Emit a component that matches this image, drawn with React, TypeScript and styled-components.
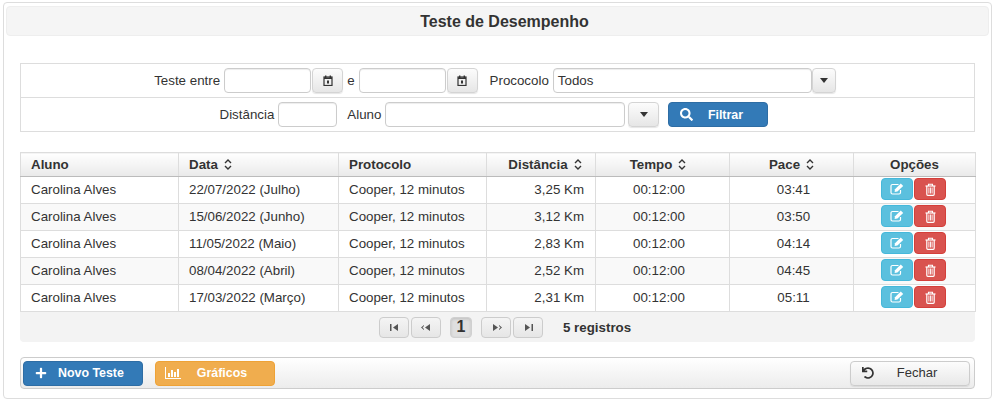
import React from "react";
import styled, { createGlobalStyle, css } from "styled-components";
import { FaPlus, FaSearch, FaUndo } from "react-icons/fa";

const Global = createGlobalStyle`
  html, body { margin: 0; padding: 0; background: #fff; }
  body { font-family: "Liberation Sans", Arial, sans-serif; font-size: 13.33px; color: #333; }
  * { box-sizing: border-box; }
`;

const Page = styled.div`
  width: 996px;
  height: 402px;
  padding: 2px 4px 3px 3px;
`;
const Panel = styled.div`
  height: 397px;
  border: 1px solid #ddd;
  border-radius: 4px;
  padding: 3px 2px 0 2px;
`;
const Title = styled.h1`
  margin: 0;
  height: 30px;
  padding-left: 14px;
  background: #f5f5f5;
  border: 1px solid #eee;
  border-radius: 4px;
  font-size: 16px;
  line-height: 29px;
  font-weight: 700;
  text-align: center;
  color: #333;
`;
const Body = styled.div`
  padding: 27px 14px 0 14px;
`;
const Filters = styled.div`
  border: 1px solid #ddd;
  height: 69px;
  display: flex;
  flex-direction: column;
`;
const FilterRow = styled.div<{ $last?: boolean }>`
  flex: 1;
  display: flex;
  align-items: center;
  justify-content: center;
  padding-right: ${(p) => (p.$last ? 7 : 5)}px;
  ${(p) => !p.$last && css`border-bottom: 1px solid #ddd;`}
`;
const Label = styled.label<{ $gap?: number }>`
  margin-left: ${(p) => p.$gap ?? 0}px;
  margin-right: 4px;
  line-height: 25px;
`;
const Field = styled.div<{ $w: number }>`
  width: ${(p) => p.$w}px;
  height: 25px;
  border: 1px solid #ccc;
  border-radius: 4px;
  background: #fff;
  box-shadow: inset 0 1px 1px rgba(0, 0, 0, 0.075);
  padding-left: 4px;
  line-height: 23px;
  color: #333;
`;
const AddOn = styled.button<{ $w: number; $gap?: number }>`
  width: ${(p) => p.$w}px;
  height: 25px;
  margin-left: ${(p) => p.$gap ?? 1}px;
  padding: 0;
  border: 1px solid #d4d4d4;
  border-radius: 4px;
  background: linear-gradient(#fcfcfc, #e6e6e6);
  box-shadow: 0 1px 1px rgba(0, 0, 0, 0.1);
  display: flex;
  align-items: center;
  justify-content: center;
  color: #333;
`;
const Action = styled.button<{ $tone: "blue" | "orange" | "plain"; $left?: number; $auto?: boolean; $w?: number }>`
  height: 25px;
  padding: 0;
  border-radius: 4px;
  font-family: inherit;
  font-size: 12.4px;
  font-weight: 700;
  display: grid;
  align-items: center;
  width: ${(p) => p.$w ?? 120}px;
  margin-left: ${(p) => p.$left ?? 0}px;
  ${(p) => p.$auto && css`margin-left: auto;`}
  grid-template-columns: 34px 1fr 20px;
  ${(p) =>
    p.$tone === "blue" &&
    css`background: #337ab7; border: 1px solid #2e6da4; color: #fff;`}
  ${(p) =>
    p.$tone === "orange" &&
    css`background: #f0ad4e; border: 1px solid #eea236; color: #fff;`}
  ${(p) =>
    p.$tone === "plain" &&
    css`background: linear-gradient(#fcfcfc, #e8e8e8); border: 1px solid #ccc; color: #333; font-weight: 400; font-size: 13px; padding-bottom: 1px; box-shadow: 0 1px 1px rgba(0,0,0,.08);`}
  & > svg { justify-self: center; }
`;
const ActionText = styled.span`
  text-align: center;
  white-space: nowrap;
`;
const TableWrap = styled.div`
  margin-top: 20px;
  border-radius: 0 0 4px 4px;
  background: #f3f3f3;
  height: 190px;
`;
const Grid = styled.table`
  width: 955px;
  table-layout: fixed;
  border-collapse: collapse;
  background: #fff;
`;
const Head = styled.th<{ $align?: string; $left?: number; $right?: number }>`
  height: 24px;
  padding: 0 ${(p) => p.$right ?? 10}px 0 ${(p) => p.$left ?? 10}px;
  border: 1px solid #ddd;
  border-bottom: 1px solid #bbb;
  background: linear-gradient(#fff, #e9e9e9);
  font-size: 13.33px;
  font-weight: 700;
  color: #333;
  text-align: ${(p) => p.$align ?? "left"};
  white-space: nowrap;
`;
const Row = styled.tr<{ $odd?: boolean }>`
  background: ${(p) => (p.$odd ? "#f9f9f9" : "#fff")};
`;
const Cell = styled.td<{ $align?: string; $left?: number; $right?: number }>`
  height: 27px;
  padding: 0 ${(p) => p.$right ?? 10}px 2px ${(p) => p.$left ?? 10}px;
  border: 1px solid #ddd;
  font-size: 13.33px;
  color: #333;
  text-align: ${(p) => p.$align ?? "left"};
  white-space: nowrap;
`;
const OptionCell = styled.div`
  display: flex;
  justify-content: center;
  gap: 1px;
`;
const IconBtn = styled.button<{ $tone: "info" | "danger" }>`
  width: 32px;
  height: 22px;
  padding: 0;
  border-radius: 4px;
  color: #fff;
  display: flex;
  align-items: center;
  justify-content: center;
  ${(p) =>
    p.$tone === "info"
      ? css`background: #5bc0de; border: 1px solid #46b8da;`
      : css`background: #d9534f; border: 1px solid #d43f3a;`}
`;
const SortMark = styled.svg`
  margin-left: 6px;
  vertical-align: -1px;
`;
const Pager = styled.div`
  height: 30px;
  display: flex;
  align-items: center;
  padding-left: 359px;
`;
const PageBtn = styled.button<{ $gap?: number }>`
  width: 30px;
  height: 21px;
  padding: 0;
  margin-left: ${(p) => p.$gap ?? 2}px;
  border: 1px solid #ccc;
  border-radius: 4px;
  background: linear-gradient(#f4f4f4, #e6e6e6);
  display: flex;
  align-items: center;
  justify-content: center;
`;
const PageNow = styled.button`
  width: 22px;
  height: 21px;
  margin: 0 9px;
  padding: 0;
  border: 1px solid #d0d0d0;
  border-radius: 4px;
  background: #dfdfdf;
  box-shadow: inset 0 1px 3px rgba(0, 0, 0, 0.15);
  font-family: inherit;
  font-size: 16px;
  font-weight: 700;
  color: #333;
`;
const Count = styled.span`
  margin-left: 20px;
  font-weight: 700;
  font-size: 13.33px;
`;
const Toolbar = styled.div`
  margin-top: 15px;
  height: 32px;
  border: 1px solid #ccc;
  border-radius: 4px;
  background: linear-gradient(#fff, #ececec);
  display: flex;
  align-items: center;
  padding: 0 4px 0 2px;
`;

const Calendar = () => (
  <svg width="10" height="11" viewBox="0 0 10 11" fill="none" stroke="#333">
    <rect x="1" y="2" width="8" height="8.5" strokeWidth="1.2" />
    <path d="M1 3.2h8M2.7 0.5v2.2M7.3 0.5v2.2" strokeWidth="1.4" />
    <rect x="4" y="5.5" width="2" height="3" fill="#333" stroke="none" />
  </svg>
);
const Caret = () => (
  <svg width="8" height="5" viewBox="0 0 8 5"><path d="M0 0h8L4 5z" fill="#333" /></svg>
);
const Sort = () => (
  <SortMark width="8" height="11" viewBox="0 0 8 11" fill="none" stroke="#333" strokeWidth="1.4">
    <path d="M1 4l3-3 3 3M1 7l3 3 3-3" />
  </SortMark>
);
const Bars = () => (
  <svg width="16" height="12" viewBox="0 0 16 12" fill="#fff">
    <path d="M0 0h1v11h15v1H0z" />
    <path d="M3 6h2v4H3zM6 3h2v7H6zM9 5h2v5H9zM12 2h2v8h-2z" />
  </svg>
);
const EditIcon = () => (
  <svg width="14" height="12" viewBox="0 0 14 12" fill="none">
    <path d="M8.5 1.5H2.5a1.5 1.5 0 0 0-1.5 1.5v6.5A1.5 1.5 0 0 0 2.5 11h6.5a1.5 1.5 0 0 0 1.5-1.5V7" stroke="#fff" strokeWidth="1.2" />
    <path d="M5 6.2L10.8 0.5l2.4 2.4L7.4 8.6 4.6 9z" fill="#fff" />
  </svg>
);
const TrashIcon = () => (
  <svg width="11" height="13" viewBox="0 0 11 13" fill="none" stroke="#fff">
    <path d="M0.5 3h10" strokeWidth="1.2" />
    <path d="M3.5 3V1.2h4V3" strokeWidth="1.1" />
    <path d="M1.8 3v8.3a1 1 0 0 0 1 1h5.4a1 1 0 0 0 1-1V3" strokeWidth="1.2" />
    <path d="M3.9 4.5v6M5.5 4.5v6M7.1 4.5v6" strokeWidth="0.9" />
  </svg>
);
const PagerIcon = ({ d }: { d: string }) => (
  <svg width="11" height="7" viewBox="0 0 11 7"><path d={d} fill="#555" /></svg>
);
const icons = {
  first: "M1 0h1.5v7H1zM4 3.5L9 0v7z",
  prev: "M0 3.5L3 1v1L1.5 3.5 3 5v1zM4 3.5L9 0v7z",
  next: "M2 0l5 3.5L2 7zM8 1l3 2.5L8 6V5l1.5-1.5L8 2z",
  last: "M2 0l5 3.5L2 7zM8.5 0H10v7H8.5z",
};

const rows = [
  ["22/07/2022 (Julho)", "3,25 Km", "03:41"],
  ["15/06/2022 (Junho)", "3,12 Km", "03:50"],
  ["11/05/2022 (Maio)", "2,83 Km", "04:14"],
  ["08/04/2022 (Abril)", "2,52 Km", "04:45"],
  ["17/03/2022 (Março)", "2,31 Km", "05:11"],
];
const widths = [158, 160, 148, 109, 134, 124, 122];

export default function App() {
  return (
    <Page>
      <Global />
      <Panel>
        <Title>Teste de Desempenho</Title>
        <Body>
          <Filters>
            <FilterRow>
              <Label>Teste entre</Label>
              <Field $w={87} />
              <AddOn $w={31}><Calendar /></AddOn>
              <Label $gap={4}>e</Label>
              <Field $w={87} />
              <AddOn $w={31}><Calendar /></AddOn>
              <Label $gap={12}>Prococolo</Label>
              <Field $w={259}>Todos</Field>
              <AddOn $w={24} $gap={0}><Caret /></AddOn>
            </FilterRow>
            <FilterRow $last>
              <Label>Distância</Label>
              <Field $w={59} />
              <Label $gap={10}>Aluno</Label>
              <Field $w={240} />
              <AddOn $w={31} $gap={3}><Caret /></AddOn>
              <Action $tone="blue" $left={9} $w={100}>
                <FaSearch size={13} />
                <ActionText>Filtrar</ActionText>
              </Action>
            </FilterRow>
          </Filters>
          <TableWrap>
            <Grid>
              <colgroup>
                {widths.map((w, i) => <col key={i} style={{ width: w }} />)}
              </colgroup>
              <thead>
                <tr>
                  <Head>Aluno</Head>
                  <Head>Data<Sort /></Head>
                  <Head>Protocolo</Head>
                  <Head $align="center" $left={18}>Distância<Sort /></Head>
                  <Head $align="center" $right={19}>Tempo<Sort /></Head>
                  <Head $align="center">Pace<Sort /></Head>
                  <Head $align="center">Opções</Head>
                </tr>
              </thead>
              <tbody>
                {rows.map(([date, dist, pace], i) => (
                  <Row key={date} $odd={i % 2 === 1}>
                    <Cell>Carolina Alves</Cell>
                    <Cell>{date}</Cell>
                    <Cell>Cooper, 12 minutos</Cell>
                    <Cell $align="right" $right={11}>{dist}</Cell>
                    <Cell $align="center" $right={17}>00:12:00</Cell>
                    <Cell $align="center" $left={14}>{pace}</Cell>
                    <Cell $align="center" $right={12}>
                      <OptionCell>
                        <IconBtn $tone="info"><EditIcon /></IconBtn>
                        <IconBtn $tone="danger"><TrashIcon /></IconBtn>
                      </OptionCell>
                    </Cell>
                  </Row>
                ))}
              </tbody>
            </Grid>
            <Pager>
              <PageBtn $gap={0}><PagerIcon d={icons.first} /></PageBtn>
              <PageBtn><PagerIcon d={icons.prev} /></PageBtn>
              <PageNow>1</PageNow>
              <PageBtn $gap={0}><PagerIcon d={icons.next} /></PageBtn>
              <PageBtn><PagerIcon d={icons.last} /></PageBtn>
              <Count>5 registros</Count>
            </Pager>
          </TableWrap>
          <Toolbar>
            <Action $tone="blue">
              <FaPlus size={12} />
              <ActionText>Novo Teste</ActionText>
            </Action>
            <Action $tone="orange" $left={12}>
              <Bars />
              <ActionText>Gráficos</ActionText>
            </Action>
            <Action $tone="plain" $auto>
              <FaUndo size={12} />
              <ActionText>Fechar</ActionText>
            </Action>
          </Toolbar>
        </Body>
      </Panel>
    </Page>
  );
}
